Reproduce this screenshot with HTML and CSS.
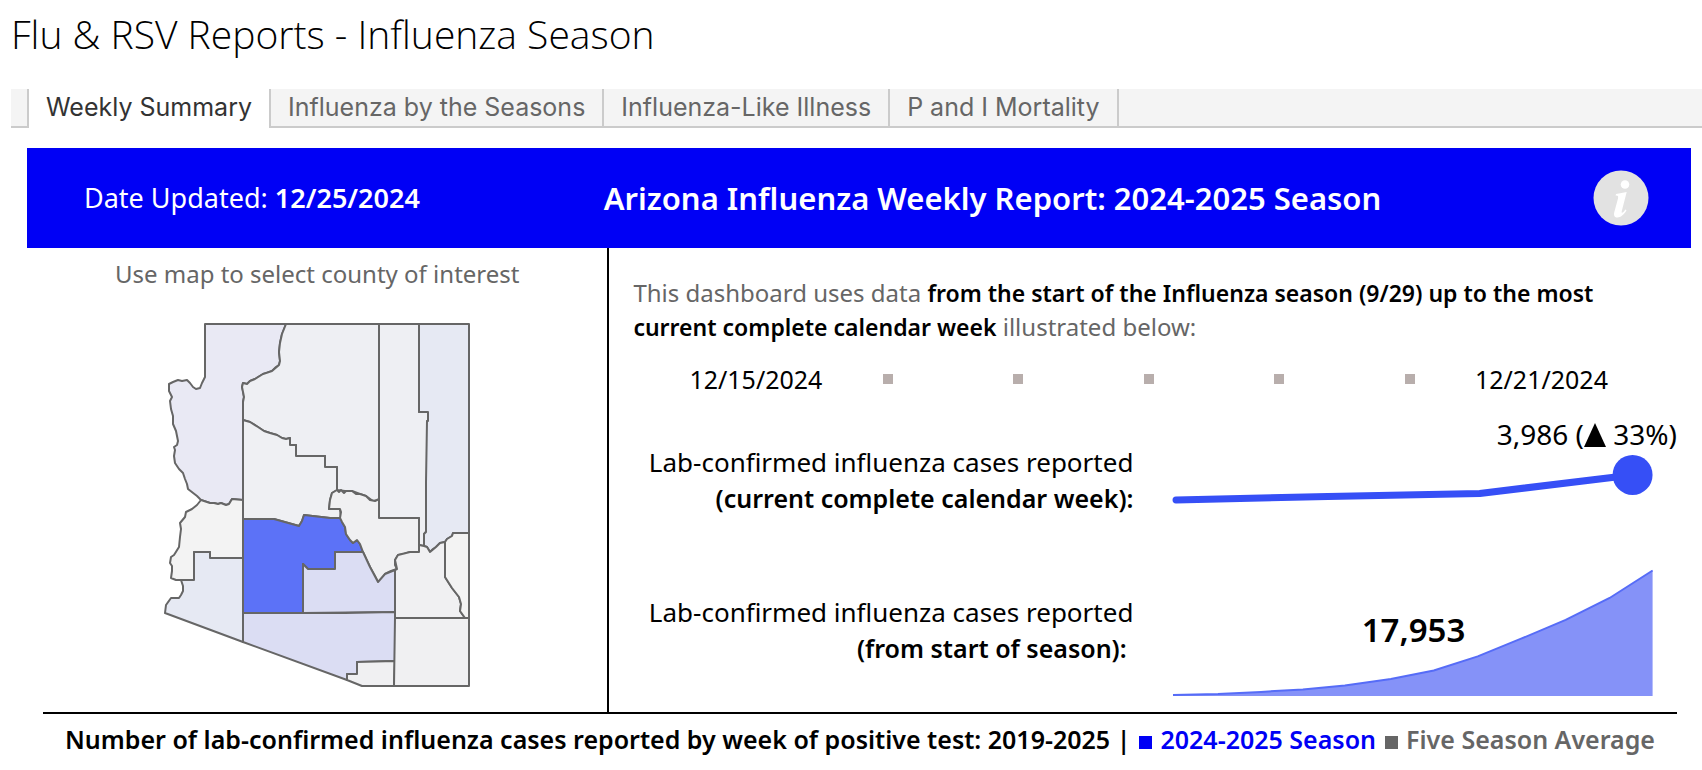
FILE: index.html
```html
<!DOCTYPE html>
<html lang="en">
<head>
    <meta charset="UTF-8">
    <meta name="viewport" content="width=device-width, initial-scale=1.0">
    <title>Flu &amp; RSV Reports - Influenza Season</title>
    <link rel="stylesheet" href="styles.css">
</head>
<body>
    <h1 class="page-title">Flu &amp; RSV Reports - Influenza Season</h1>

    <nav class="tabs">
        <a href="#" class="tab active">Weekly Summary</a>
        <a href="#" class="tab">Influenza by the Seasons</a>
        <a href="#" class="tab">Influenza-Like Illness</a>
        <a href="#" class="tab">P and I Mortality</a>
    </nav>

    <main class="dashboard">
        <header class="banner">
            <div class="updated">Date Updated: <b>12/25/2024</b></div>
            <h2 class="report-title">Arizona Influenza Weekly Report: 2024-2025 Season</h2>
            <button type="button" class="info" aria-label="Information">
                <svg width="56" height="56" viewBox="0 0 56 56">
                    <circle cx="28" cy="28" r="27.5" fill="#e2e2e2"/>
                    <circle cx="32" cy="14.5" r="4.3" fill="#fff"/>
                    <path d="M23 24C27 23.5 30 22.7 33.7 22L28.8 41C28.2 44 30 43 32.3 39.5L33.5 40.3C31 45 27.5 47.5 24.5 47.5C21.5 47.5 20.6 45.5 21.2 42.5L25 28.5C25.5 26 25 25.5 22.6 25.6Z" fill="#fff"/>
                </svg>
            </button>
        </header>

        <div class="columns">
            <section class="map-panel">
                <p class="map-hint">Use map to select county of interest</p>
                <svg class="map" width="309" height="368" viewBox="163 321 309 368">
                    <!-- Mohave -->
                    <path fill="#e9e9f4" d="M205 324H286L282 334 280 343 279 352 280 361 279 365 276 367 272 371 267 373 263 374 258 377 255 379 250 381 247 384 243 383 242 387 243 391 244 397 243 402V500L232 499 229 504 226 505 221 503 218 504 214 503 210 503 201 500 197 496 188 489 187 484 185 479 183 473 179 469 175 463 174 456 175 450 174 447 177 445 178 441 176 431 173 424 173 416 171 409 170 401 172 397 169 391 169 384 173 382 178 380 182 381 187 380 190 383 193 387 196 389 200 388 202 383 205 377Z"/>
                    <!-- Coconino -->
                    <path fill="#eeeff3" d="M286 324H379V500L373 501 366 496 360 494 352 491 345 491 337 490V467H325V456H296V445H290V438L286 439 282 438 277 435 270 433 264 431 258 427 250 422 243 420V402L244 397 242 387 243 383 247 384 250 381 255 379 263 374 272 371 279 365 280 361 279 352 280 343 282 334Z"/>
                    <!-- Navajo -->
                    <path fill="#eeeff3" d="M379 324H419V412H428V421H427V480L426 490 427 500V530L424 534V546L419 545V518H379Z"/>
                    <!-- Apache -->
                    <path fill="#e6e9f3" d="M419 324H469V533H453L452 536 447 539 445 542 440 543 436 547 433 549 430 552 427 547 424 546 424 534 426 532V500L426 482 427 421H428V412H419Z"/>
                    <!-- Yavapai -->
                    <path fill="#eff0f3" d="M243 420L250 422 258 427 264 431 270 433 277 435 282 438 286 439 290 438V445H296V456H325V467H337V490L332 493 330 500 329 509H340L341 518 330 518 304 515 302 521 299 526 274 519H243Z"/>
                    <!-- La Paz -->
                    <path fill="#f3f3f3" d="M201 500L210 503 214 503 218 504 221 503 226 505 229 504 232 499 243 500V558H210V552H194V580H176L171 578 172 571 172 566 170 563 171 557 174 555 179 547 180 537 181 529 180 523 185 517 186 512 192 509 197 505Z"/>
                    <!-- Yuma -->
                    <path fill="#e6e9f3" d="M194 580V552H210V558H243V642L165 613 166 605 171 598 179 598 181 595 183 591 183 586 181 580Z"/>
                    <!-- Maricopa -->
                    <path fill="#5c72f7" d="M243 519H274L299 526 302 521 304 515 330 518H342L342 522 345 527 346 534 350 540 353 543 357 540 360 544 363 552H335V569H308L303 564V613H243Z"/>
                    <!-- Gila -->
                    <path fill="#f0f0f2" d="M337 490L339 492 341 490 344 493 346 491 352 491 356 494 360 494 366 496 370 500 375 501 379 499V518H419V552H410L404 554 398 555 395 560 395 565 397 569 391 571 385 574 382 579 378 582 375 576 370 567 363 552 360 544 357 540 353 543 350 540 346 534 345 527 342 522 340 518 341 512 340 509H329L330 500 332 493Z"/>
                    <!-- Pinal -->
                    <path fill="#dbddf3" d="M303 613V564L308 569H335V552H363L370 567 378 582 385 574 395 570V612Z"/>
                    <!-- Pima -->
                    <path fill="#dbddf3" d="M243 613L345 613 395 612V661L357 662V674H347V680L243 642Z"/>
                    <!-- Santa Cruz -->
                    <path fill="#f0f0f2" d="M357 662L395 661 394 686H362L347 680V674H357Z"/>
                    <!-- Cochise -->
                    <path fill="#f0f0f2" d="M395 618H469V686H394Z"/>
                    <!-- Graham -->
                    <path fill="#f0f0f2" d="M395 618V570L397 569 395 560 398 555 410 552H419V545L424 546 427 547 430 552 436 547 440 543 445 542V577L452 588 459 597 461 604 460 611 465 618Z"/>
                    <!-- Greenlee -->
                    <path fill="#f3f3f3" d="M445 542L447 539 452 536 453 533H469V618H465L460 611 461 604 459 597 452 588 445 577Z"/>
                </svg>
            </section>

            <section class="stats">
                <p class="intro">This dashboard uses data <b>from the start of the Influenza season (9/29) up to the most current complete calendar week</b> illustrated below:</p>

                <div class="week">
                    <span>12/15/2024</span>
                    <i class="day"></i>
                    <i class="day"></i>
                    <i class="day"></i>
                    <i class="day"></i>
                    <i class="day"></i>
                    <span>12/21/2024</span>
                </div>

                <div class="stat weekly">
                    <p class="stat-label">Lab-confirmed influenza cases reported<br><b>(current complete calendar week):</b></p>
                    <div class="chart">
                        <p class="change">3,986 (<svg class="arrow" width="22" height="24" viewBox="0 0 22 24"><path d="M11 0L22 24H0Z"/></svg> 33%)</p>
                        <svg class="spark" viewBox="1171 454 484 66">
                            <path d="M1176 500L1328 496.5 1480 493.5 1633 475" fill="none" stroke="#364ff6" stroke-width="7" stroke-linecap="round" stroke-linejoin="round"/>
                            <circle cx="1633" cy="475" r="20" fill="#364ff6"/>
                        </svg>
                    </div>
                </div>

                <div class="stat">
                    <p class="stat-label">Lab-confirmed influenza cases reported<br><b>(from start of season):</b>&nbsp;</p>
                    <div class="chart">
                        <svg class="area" viewBox="1171 569 484 127">
                            <path d="M1173 695L1218 694 1261 692 1303 689.5 1345 685.5 1391 679 1434 670.5 1478 656.5 1522 638.5 1566 620 1610 598 1653 570.5V696H1173Z" fill="#8592f8"/>
                            <path d="M1173 695L1218 694 1261 692 1303 689.5 1345 685.5 1391 679 1434 670.5 1478 656.5 1522 638.5 1566 620 1610 598 1653 570.5" fill="none" stroke="#566cf7" stroke-width="2"/>
                        </svg>
                        <b class="total">17,953</b>
                    </div>
                </div>
            </section>
        </div>

        <h3 class="trend-title">Number of lab-confirmed influenza cases reported by week of positive test: 2019-2025 | <span class="current"><i class="box"></i> 2024-2025 Season</span> <span class="average"><i class="box"></i> Five Season Average</span></h3>
    </main>
</body>
</html>
```
FILE: styles.css
```css
* {
    box-sizing: border-box;
}

body {
    margin: 0;
    background: #fff;
    color: #000;
    font-family: 'Noto Sans', 'Open Sans', sans-serif;
    font-size: 24px;
    line-height: 36px;
}

h1, h2, h3, p {
    margin: 0;
}

b {
    font-weight: 600;
}

.page-title {
    padding: 6px 11px 27px;
    font-family: 'Open Sans', sans-serif;
    font-size: 39px;
    font-weight: 300;
    line-height: 56px;
}

/* tabs */
.tabs {
    display: flex;
    height: 39px;
    margin-left: 11px;
    padding-left: 16px;
    background: linear-gradient(#f4f4f4, #f4f4f4) 0 0 / 100% 37px no-repeat, #cbcbcb;
    font-family: Inter, sans-serif;
    font-size: 25px;
}

.tab {
    padding: 0 17px;
    border-right: 2px solid #cbcbcb;
    color: #666;
    line-height: 36px;
    text-decoration: none;
}

.tab.active {
    border-left: 2px solid #cbcbcb;
    background: #fff;
    color: #333;
}

.dashboard {
    padding: 20px 11px 0 27px;
}

/* blue header */
.banner {
    display: flex;
    align-items: center;
    height: 100px;
    padding: 0 42px 0 57px;
    background: #0000f5;
    color: #fff;
}

.updated {
    font-size: 27px;
}

.report-title {
    flex: 1;
    padding-right: 28px;
    font-size: 31px;
    font-weight: 600;
    text-align: center;
}

.info {
    padding: 0;
    border: none;
    background: none;
    cursor: pointer;
}

.info svg {
    display: block;
}

.columns {
    display: grid;
    grid-template-columns: 35% 65%;
}

/* county map */
.map-panel {
    padding: 8px 0 23px;
    border-right: 2px solid #000;
    text-align: center;
}

.map-hint {
    margin-bottom: 29px;
    color: #666;
}

.map {
    display: block;
    margin: 0 auto;
    stroke: #666;
    stroke-width: 2;
    stroke-linejoin: round;
}

/* numbers and small charts */
.stats {
    padding: 28px 14px 0 24px;
}

.intro {
    color: #666;
    line-height: 34px;
}

.intro b {
    color: #000;
    font-size: 23px;
}

.week {
    display: grid;
    grid-template-columns: repeat(7, 1fr);
    align-items: center;
    justify-items: center;
    margin: 17px 69px 19px 56px;
    font-size: 25px;
}

.day {
    width: 10px;
    height: 10px;
    background: #b8aeac;
}

.stat {
    display: grid;
    grid-template-columns: 500px 1fr;
    align-items: center;
    margin-bottom: 16px;
}

.weekly {
    align-items: end;
    margin-bottom: 49px;
}

.stat-label {
    padding-bottom: 4px;
    font-size: 26px;
    text-align: right;
}

.stat-label b {
    font-size: 25px;
}

.chart {
    position: relative;
    padding: 0 22px 0 38px;
}

.spark,
.area {
    display: block;
    width: 100%;
}

.change {
    margin: 0 -22px 2px 0;
    font-size: 28px;
    text-align: right;
}

.arrow {
    vertical-align: -2px;
}

.total {
    position: absolute;
    top: 43px;
    left: 42%;
    font-size: 33px;
}

/* heading of the weekly chart */
.trend-title {
    margin: 0 14px 0 16px;
    padding-top: 7px;
    border-top: 2px solid #000;
    font-size: 25px;
    font-weight: 600;
    text-align: center;
}

.box {
    display: inline-block;
    width: 13px;
    height: 13px;
    margin: 0 2px;
    background: currentColor;
}

.current {
    color: #0000f5;
}

.average {
    color: #666;
}
```
